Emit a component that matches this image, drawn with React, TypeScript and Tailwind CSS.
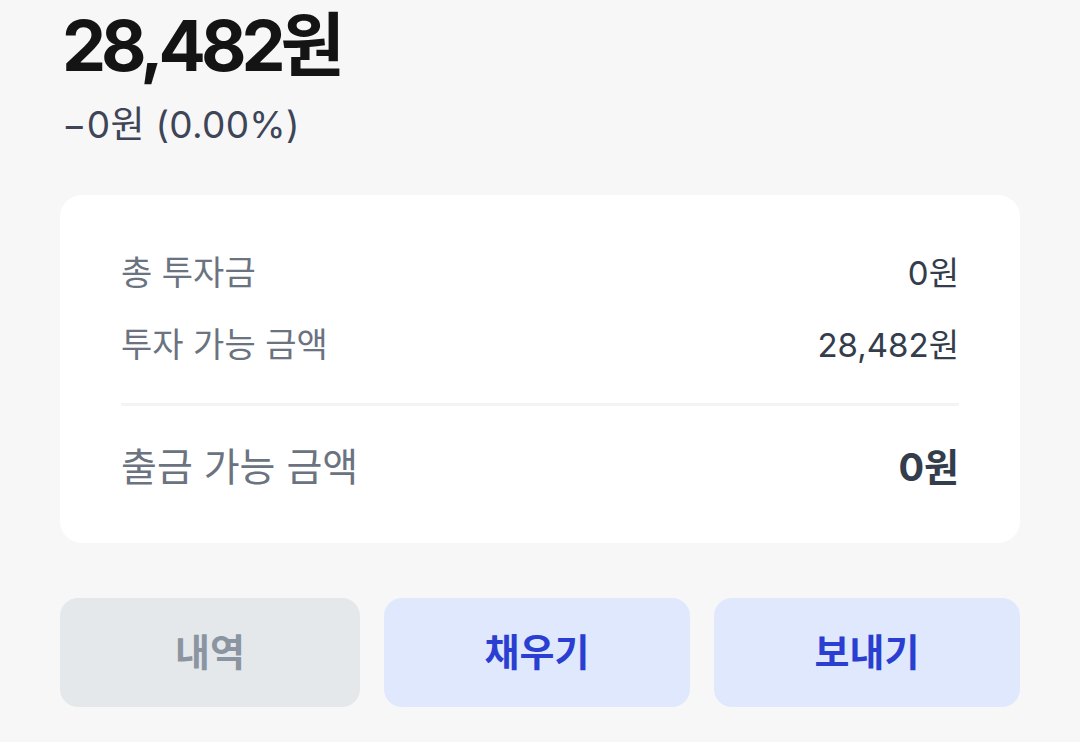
const FONT = "font-['Inter','Noto_Sans_CJK_KR',sans-serif]";

function Row({ label, value, big }: { label: string; value: string; big?: boolean }) {
  return (
    <div className="flex items-center justify-between">
      <span className={big ? "text-[39px] leading-[50px] text-[#6b7280]" : "text-[34px] leading-[44px] text-[#6b7280]"}>
        {label}
      </span>
      <span className={big ? "text-[38px] leading-[50px] font-bold text-[#333d4b]" : "text-[33px] leading-[44px] text-[#333d4b]"}>
        {value}
      </span>
    </div>
  );
}

export default function App() {
  return (
    <div className={`${FONT} min-h-[742px] w-full bg-[#f7f7f8] px-[60px] pt-[6px]`}>
      <div className="pl-[2px]">
        <h1 className="text-[70px] leading-[80px] font-bold tracking-[-5px] text-[#141414]">28,482원</h1>
        <p className="mt-[17px] text-[37px] leading-[44px] tracking-[0.3px] text-[#3e4557]">−0원 (0.00%)</p>
      </div>

      <div className="mt-[48px] rounded-[22px] bg-white px-[61px] pt-[56px] pb-[51px]">
        <div className="flex flex-col gap-[28px]">
          <Row label="총 투자금" value="0원" />
          <Row label="투자 가능 금액" value="28,482원" />
        </div>
        <div className="mt-[36px] h-[3px] bg-[#f2f4f6]" />
        <div className="mt-[36px]">
          <Row label="출금 가능 금액" value="0원" big />
        </div>
      </div>

      <div className="mt-[55px] grid grid-cols-[300px_1fr_1fr] gap-[24px]">
        <button className="h-[109px] rounded-[18px] bg-[#e5e8eb] text-[38px] font-bold text-[#8b95a1]">내역</button>
        <button className="h-[109px] rounded-[18px] bg-[#dfe8fd] text-[38px] font-bold text-[#2a3fd1]">채우기</button>
        <button className="h-[109px] rounded-[18px] bg-[#dfe8fd] text-[38px] font-bold text-[#2a3fd1]">보내기</button>
      </div>
    </div>
  );
}
